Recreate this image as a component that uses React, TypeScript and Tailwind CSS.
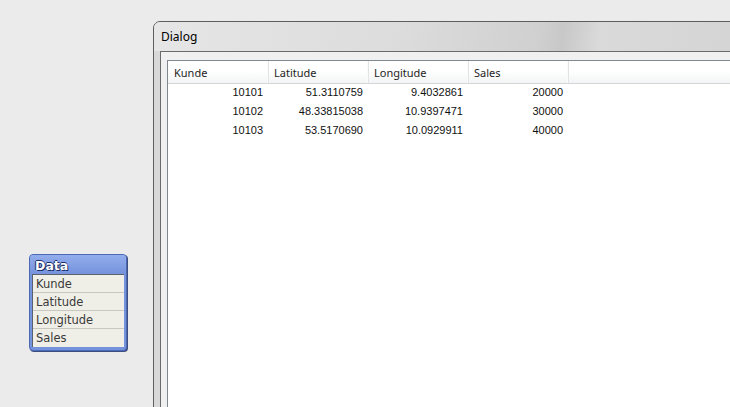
import { memo } from "react";

const columns = ["Kunde", "Latitude", "Longitude", "Sales"];

const rows = [
  ["10101", "51.3110759", "9.4032861", "20000"],
  ["10102", "48.33815038", "10.9397471", "30000"],
  ["10103", "53.5170690", "10.0929911", "40000"],
];

const fields = ["Kunde", "Latitude", "Longitude", "Sales"];

const DataBox = memo(() => {
  return (
    <div className="absolute left-[29px] top-[254px] w-[98px] rounded-[4px] border border-[#4c69b3] bg-[#7592dc] pb-[3px] pl-[2px] pr-[2px] shadow-[1px_1px_0_#3d4f80]">
      <div className="h-[19px] -mx-[2px] px-[5px] rounded-t-[3px] text-[12.5px] leading-[22px] font-bold text-white [font-family:'DejaVu_Sans',sans-serif] [text-shadow:1px_1px_0_#1c2d66,-1px_0_0_#1c2d66,0_-1px_0_#1c2d66] bg-[linear-gradient(#93adec,#7592dc)]">
        Data
      </div>
      <div className="flex flex-col border-l border-t border-[#5a6270] bg-[#f0efe7]">
        {fields.map((f, i) => (
          <div
            key={f}
            className={`h-[18px] pl-[3px] text-[11.5px] leading-[19px] text-[#3a3a3a] [font-family:'DejaVu_Sans',sans-serif] ${i < fields.length - 1 ? "border-b border-[#c9c8c0]" : ""}`}
          >
            {f}
          </div>
        ))}
      </div>
    </div>
  );
});
DataBox.displayName = "DataBox";

const Dialog = memo(() => {
  return (
    <div className="absolute left-[153px] top-[21px] w-[620px] h-[420px] rounded-t-[7px] border border-[#5d5d5d] bg-[#d8d8d8] flex flex-col">
      <div className="h-[29px] shrink-0 rounded-t-[6px] pl-[7px] pt-[7px] text-[12px] leading-[16px] text-black [font-family:'Noto_Sans',sans-serif] bg-[linear-gradient(100deg,#e6e6e6_0%,#dcdcdc_40%,#d0d0d0_62%,#c8c8c8_66%,#dadada_72%,#d3d3d3_100%)]">
        Dialog
      </div>
      <div className="flex-1 mx-[6px] border border-[#6a6a6a] bg-[#f0f0f0] px-[6px] pt-[8px]">
        <div className="h-full border border-[#828790] bg-white">
          <div className="flex h-[23px] pl-[1px] border-b border-[#d5d5d5] bg-[linear-gradient(#ffffff,#ffffff_45%,#f3f4f5)]">
            {columns.map((c) => (
              <div
                key={c}
                className="w-[100px] shrink-0 border-r border-[#e2e3e5] pl-[5px] pt-[4px] text-[11px] leading-[16px] text-[#1e1e1e] [font-family:'Noto_Sans',sans-serif] shadow-[inset_-1px_0_0_#fbfbfb]"
              >
                {c}
              </div>
            ))}
            <div className="flex-1" />
          </div>
          {rows.map((r, i) => (
            <div key={i} className="flex h-[19px]">
              {r.map((v, j) => (
                <div
                  key={j}
                  className="w-[100px] shrink-0 pr-[5px] text-right text-[11px] leading-[16px] text-[#111] [font-family:'Liberation_Sans',sans-serif]"
                >
                  {v}
                </div>
              ))}
            </div>
          ))}
        </div>
      </div>
    </div>
  );
});
Dialog.displayName = "Dialog";

export default function App() {
  return (
    <div className="relative w-[730px] h-[407px] overflow-hidden bg-[#ebebeb]">
      <DataBox />
      <Dialog />
    </div>
  );
}
